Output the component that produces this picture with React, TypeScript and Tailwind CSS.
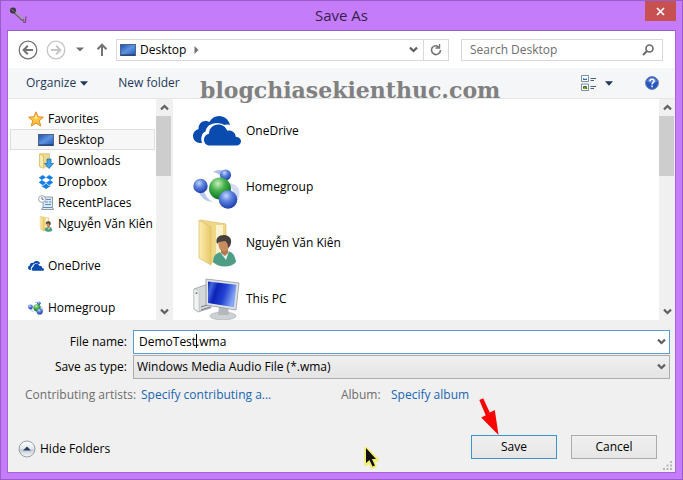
import { useState, type ReactNode } from "react";

function Chevron({ up = false, className = "" }: { up?: boolean; className?: string }) {
  return (
    <svg className={className} width="9" height="7" viewBox="0 0 9 7" fill="none" stroke="#606060" strokeWidth="2.2">
      <path d={up ? "M1 5.4 4.5 2 8 5.4" : "M1 1.6 4.5 5 8 1.6"} />
    </svg>
  );
}

function CloudIcon({ className }: { className: string }) {
  return (
    <svg className={className} viewBox="0 0 48 30" fill="#0a4bb0">
      <path d="M9 27H7C2.500 26.500 0 23.500 0 20c0-3.500 2.500-6.400 5.500-6.800C5.200 8.500 8.500 5 12.500 5c1.500 0 2.600.3 3.800 1C18.500 2 22 0 26 0c5.500 0 9.800 3.800 11 9-3-.8-5-.3-7 .6C24 5 14 7 12.500 15.500 8.500 17 7.500 22.500 9 27Z" />
      <path
        d="M17 29.500c-4 0-6-2.500-6-5.800 0-3.200 2-5.500 5-5.900C16 12.500 20 8.500 25.300 8.500c4.200 0 7.400 2.400 8.900 6.200 4.600-.8 8.200 1.800 8.500 6 3 .2 5.300 2 5.300 4.600 0 2.500-2 4.200-4.500 4.200Z"
        stroke="#fff"
        strokeWidth="2.400"
        paintOrder="stroke"
      />
    </svg>
  );
}

function HomegroupIcon({ className, id }: { className: string; id: string }) {
  return (
    <svg className={className} viewBox="0 0 48 42">
      <defs>
        <radialGradient id={id + "b"} cx=".4" cy=".3" r=".7">
          <stop offset="0" stopColor="#c3d6fb" />
          <stop offset=".45" stopColor="#5b80dd" />
          <stop offset="1" stopColor="#1c3fac" />
        </radialGradient>
        <radialGradient id={id + "g"} cx=".4" cy=".28" r=".72">
          <stop offset="0" stopColor="#c8f0bd" />
          <stop offset=".45" stopColor="#45b04b" />
          <stop offset="1" stopColor="#0b7424" />
        </radialGradient>
      </defs>
      <path d="M20 4q8-5 14 2l-5 4q-3-5-9-6Z" fill="#aebde8" />
      <path d="M5 22q4 12 15 12-8-4-9-12Z" fill="#b9c7ec" />
      <path d="M38 15q12 4 7 17l-6-3q3-8-4-12Z" fill="#d3dcf3" />
      <circle cx="32.500" cy="7" r="5.500" fill={`url(#${id}b)`} />
      <circle cx="7.500" cy="18" r="7.200" fill={`url(#${id}b)`} />
      <circle cx="27" cy="20.500" r="11" fill={`url(#${id}g)`} />
      <circle cx="35" cy="31.500" r="9.300" fill={`url(#${id}b)`} />
    </svg>
  );
}

function UserFolderIcon({ className, id }: { className: string; id: string }) {
  return (
    <svg className={className} viewBox="0 0 40 48">
      <defs>
        <linearGradient id={id}>
          <stop offset="0" stopColor="#fbeeb2" />
          <stop offset="1" stopColor="#e8c968" />
        </linearGradient>
      </defs>
      <path d="M3 1l26 4v33l-15 6Z" fill="#efd788" stroke="#dcc06b" strokeWidth=".7" />
      <path d="M19 6h7v30h-7Z" fill="#fffbe6" opacity=".75" />
      <path d="M2 1l12 7v38L2 39Z" fill={`url(#${id})`} stroke="#d9bc62" strokeWidth=".7" />
      <path d="M16 43c0-6 3-9 8-10l7-1c5 1 7 5 8 11-5 6-17 6-23 0Z" fill="#4d9e85" />
      <path d="M23 33l6 8 3-9Z" fill="#e2f4ec" />
      <path d="M24 29h7v5l-3 3-4-3Z" fill="#b2784f" />
      <ellipse cx="27" cy="25" rx="5.600" ry="7.500" fill="#c98c5f" />
      <path d="M20 25c-2-6 2-9 7-9 6 0 9 5 6 11l-2 2c0-4-1-6-3-7-3 1-6 0-8 3Z" fill="#47403f" />
    </svg>
  );
}

function ComputerIcon({ className }: { className: string }) {
  return (
    <svg className={className} viewBox="0 0 48 42">
      <defs>
        <linearGradient id="screen" x2="1" y2=".3">
          <stop offset="0" stopColor="#0c25aa" />
          <stop offset=".15" stopColor="#4468dc" />
          <stop offset=".35" stopColor="#0d22b8" />
          <stop offset=".65" stopColor="#2142d2" />
          <stop offset="1" stopColor="#86a5f3" />
        </linearGradient>
      </defs>
      <path d="M1 11l11-4 6 3v20L5 34l-4-3Z" fill="#d5d8da" stroke="#8e9498" strokeWidth=".7" />
      <path d="M1 11l5 2v21l-5-3Z" fill="#f1f2f3" stroke="#aeb2b5" strokeWidth=".5" />
      <circle cx="3.500" cy="15" r="1" fill="#4a9c45" />
      <path d="M8 29l9-3M8 32l9-3" stroke="#777c80" />
      <ellipse cx="30" cy="38" rx="13" ry="4" fill="#cfd2d5" stroke="#a5a9ad" strokeWidth=".6" />
      <path d="M26 29h9l1 8H25Z" fill="#b4b9be" />
      <path d="M13 1l33 4-3 27-30-5Z" fill="#dfe2e5" stroke="#92989e" strokeWidth=".8" />
      <path d="M15 3.500l28.500 3.300-2.500 22.500-26-4.300Z" fill="url(#screen)" />
    </svg>
  );
}

function MonitorIcon() {
  return (
    <svg className="h-3 w-4 shrink-0" viewBox="0 0 16 12">
      <defs>
        <linearGradient id="monitor" x2="1" y2="1">
          <stop offset="0" stopColor="#1b4fae" />
          <stop offset=".5" stopColor="#5f94df" />
          <stop offset="1" stopColor="#1c55b5" />
        </linearGradient>
      </defs>
      <rect x=".5" y=".5" width="15" height="11" fill="url(#monitor)" stroke="#4c6488" />
      <path d="M1 11h14" stroke="#16305e" />
    </svg>
  );
}

function StarIcon() {
  return (
    <svg className="size-4 shrink-0" viewBox="0 0 16 16">
      <path d="M8 .8l2.100 5 5.300.4-4.100 3.500 1.400 5.300L8 12.200 3.300 15l1.400-5.300L.6 6.200l5.300-.4Z" fill="#fdc63a" stroke="#e58a2a" strokeLinejoin="round" />
      <path d="M8 3.500l1.200 3.300 2.800.3-6 1Z" fill="#fff0a8" />
    </svg>
  );
}

function DownloadsIcon() {
  return (
    <svg className="size-4 shrink-0" viewBox="0 0 16 16">
      <path d="M2 .8h9.500V14H2Z" fill="#efd98c" stroke="#d3b75e" strokeWidth=".7" />
      <path d="M1.500.8l4 2v12.500l-4-1.800Z" fill="#f8eab0" stroke="#d3b75e" strokeWidth=".7" />
      <path d="M9 6h4v4.500h2.500L11 15.500l-4.500-5H9Z" fill="#3aa0e8" stroke="#1668af" strokeWidth=".7" />
    </svg>
  );
}

function DropboxIcon() {
  return (
    <svg className="size-4 shrink-0" viewBox="0 0 16 16" fill="#147fe6">
      <path d="M4.800 1 .8 3.700l3 2.400L8 3.500ZM11.200 1l4 2.700-3 2.400L8 3.500ZM.8 8.500l4 2.700L8 8.700 3.800 6.100ZM15.200 8.500l-4 2.700L8 8.700l4.200-2.600ZM4.900 12 8 9.500l3.100 2.500 1.300-.8v1L8 15l-4.400-2.800v-1Z" />
    </svg>
  );
}

function RecentIcon() {
  return (
    <svg className="size-4 shrink-0" viewBox="0 0 16 16">
      <path d="M5 2h9.500v10l1 2.500H3.500L5 12Z" fill="#dfe8f0" stroke="#75889b" strokeWidth=".8" />
      <path d="M8 4.500h5M7 7h3M11 7h2.500M7 9.500h6M5 12.500h9" stroke="#5f8fb8" />
      <circle cx="4" cy="4" r="3.400" fill="#f6f8fa" stroke="#8c98a4" strokeWidth=".8" />
      <path d="M4 2v2.300h1.600" fill="none" stroke="#4c5a68" strokeWidth=".8" />
    </svg>
  );
}

type TreeItem = { label: string; icon: ReactNode; child?: boolean; selected?: boolean; spaced?: boolean };

const places: TreeItem[] = [
  { label: "Favorites", icon: <StarIcon /> },
  { label: "Desktop", icon: <MonitorIcon />, child: true, selected: true },
  { label: "Downloads", icon: <DownloadsIcon />, child: true },
  { label: "Dropbox", icon: <DropboxIcon />, child: true },
  { label: "RecentPlaces", icon: <RecentIcon />, child: true },
  { label: "Nguyễn Văn Kiên", icon: <UserFolderIcon className="size-4 shrink-0" id="folderSmall" />, child: true },
  { label: "OneDrive", icon: <CloudIcon className="h-3 w-4 shrink-0" />, spaced: true },
  { label: "Homegroup", icon: <HomegroupIcon className="size-4 shrink-0" id="groupSmall" />, spaced: true },
];

const files = [
  { label: "OneDrive", icon: <CloudIcon className="h-[30px] w-12" /> },
  { label: "Homegroup", icon: <HomegroupIcon className="mt-1 h-[42px] w-12" id="groupLarge" /> },
  { label: "Nguyễn Văn Kiên", icon: <UserFolderIcon className="h-12 w-10" id="folderLarge" /> },
  { label: "This PC", icon: <ComputerIcon className="h-[42px] w-12" /> },
];

function ScrollBar() {
  return (
    <div className="flex w-4 shrink-0 flex-col bg-[#f0f0f0]" aria-hidden="true">
      <div className="flex h-[17px] items-center justify-center">
        <Chevron up />
      </div>
      <div className="mr-px h-[60px] bg-[#cdcdcd]" />
      <div className="mt-auto flex h-[17px] items-center justify-center">
        <Chevron />
      </div>
    </div>
  );
}

function TitleBar() {
  return (
    <header className="grid h-[29px] shrink-0 grid-cols-3 items-start">
      <svg className="mt-1.5 ml-0.5 size-[18px]" viewBox="0 0 18 18" fill="none">
        <path d="M5 5l9 8" stroke="#77657c" strokeWidth="3" strokeLinecap="round" />
        <path d="M5 4l9 8" stroke="#d9cbdc" />
        <circle cx="4" cy="3.500" r="3" fill="#3c3640" />
        <path d="M2.500 2.500l3 2" stroke="#8b8190" />
        <path d="M14 15l2.500.5.5-6" stroke="#5a4960" />
      </svg>
      <h1 className="pt-[3px] text-center text-[15px] leading-[22px] text-[#35204d]">Save As</h1>
      <button aria-label="Close" className="flex h-5 w-[31px] items-center justify-center justify-self-end bg-[#c75050]">
        <svg width="9" height="9" viewBox="0 0 9 9" stroke="#fff" strokeWidth="1.700">
          <path d="M1 1l7 7M8 1 1 8" />
        </svg>
      </button>
    </header>
  );
}

function NavigationBar() {
  return (
    <nav className="flex h-[37px] shrink-0 items-center pr-3 pl-2.5">
      <button aria-label="Back" className="shrink-0">
        <svg width="20" height="20" viewBox="0 0 20 20" fill="none" stroke="#737373">
          <circle cx="10" cy="10" r="8.800" strokeWidth="1.300" />
          <path d="M15 10H6M9.800 5.800 5.600 10l4.200 4.200" strokeWidth="2" />
        </svg>
      </button>
      <button aria-label="Forward" className="ml-2 shrink-0">
        <svg width="20" height="20" viewBox="0 0 20 20" fill="none" stroke="#c6c6c6">
          <circle cx="10" cy="10" r="8.800" strokeWidth="1.300" />
          <path d="M5 10h9M10.200 5.800l4.200 4.200-4.200 4.200" strokeWidth="2" />
        </svg>
      </button>
      <button aria-label="Recent locations" className="ml-2.5 shrink-0">
        <svg width="8" height="5" viewBox="0 0 8 5" fill="#707070">
          <path d="M0 .5h8L4 4.500Z" />
        </svg>
      </button>
      <button aria-label="Up" className="ml-3 shrink-0">
        <svg width="12" height="13" viewBox="0 0 12 13" fill="none" stroke="#737373" strokeWidth="2">
          <path d="M6 13V2M1.500 6.200 6 1.700l4.500 4.500" />
        </svg>
      </button>
      <div className="ml-2 flex h-[22px] min-w-0 flex-1 items-center border border-[#d9d9d9] pl-[3px]">
        <MonitorIcon />
        <span className="ml-1">Desktop</span>
        <svg className="ml-2" width="5" height="8" viewBox="0 0 5 8" fill="#707070">
          <path d="M.5 0v8l4-4Z" />
        </svg>
        <button aria-label="Previous locations" className="ml-auto flex h-full w-5 items-center justify-center">
          <Chevron />
        </button>
        <button aria-label="Refresh" className="flex h-full w-[25px] items-center justify-center border-l border-[#d9d9d9]">
          <svg width="12" height="12" viewBox="0 0 12 12" fill="none" stroke="#737373" strokeWidth="1.600">
            <path d="M3.500 2.300A4.500 4.500 0 1 0 10.500 6" />
            <path d="M3.500 2.300Q6 1 8.500 3M9.500 0v4H5.500" strokeWidth="1.400" />
          </svg>
        </button>
      </div>
      <div className="ml-3 flex h-[22px] w-[202px] items-center border border-[#d9d9d9] pr-2 pl-2">
        <input aria-label="Search Desktop" placeholder="Search Desktop" className="w-full min-w-0 bg-transparent outline-none placeholder:text-[#6d6d6d]" />
        <svg className="shrink-0" width="12" height="12" viewBox="0 0 12 12" fill="none" stroke="#6d6d6d">
          <circle cx="7.500" cy="4.500" r="3.500" strokeWidth="1.700" />
          <path d="M5 7 1 11" strokeWidth="2.200" />
        </svg>
      </div>
    </nav>
  );
}

function Triangle() {
  return (
    <svg width="8" height="5" viewBox="0 0 8 5" fill="#1e395b">
      <path d="M0 .3h8L4 4.700Z" />
    </svg>
  );
}

function Toolbar() {
  return (
    <div className="relative flex h-[31px] shrink-0 items-center border-b border-[#e3e5e7] bg-[#f5f6f7] pr-4 pl-[18px] text-[#1e395b]">
      <button className="flex items-center gap-1">
        Organize <Triangle />
      </button>
      <button className="ml-[30px]">New folder</button>
      <button aria-label="Change your view" className="ml-auto flex items-center gap-2">
        <svg width="16" height="16" viewBox="0 0 16 16" fill="none">
          <path d="M.5.5h7v6h-7ZM.5 9h7v6.500h-7Z" fill="#fff" stroke="#7c8fa5" />
          <path d="M2 5h4V3.500L4 4 2 3Z" fill="#2470b5" />
          <path d="M2 11h4v3H2Z" fill="#80a63a" />
          <path d="M2 13l2-2 2 3" stroke="#315f28" />
          <path d="M9.500 3.500H15M9.500 5.500H13M9.500 11.500H15M9.500 13.500H13" stroke="#4b5f76" />
        </svg>
        <Triangle />
      </button>
      <button aria-label="Get help" className="ml-8">
        <svg width="14" height="14" viewBox="0 0 14 14">
          <circle cx="7" cy="7" r="6.500" fill="#2856bd" stroke="#7189b8" />
          <path d="M2 5.500a5.200 5.200 0 0 1 10 0Q7 8 2 5.500Z" fill="#7fa3ea" opacity=".6" />
          <path d="M5 5.300C5 2.600 9.200 2.700 9.100 5.200 9 6.700 7.100 6.700 7.100 8.400M7.100 9.600v1.600" fill="none" stroke="#fff" strokeWidth="1.500" />
        </svg>
      </button>
      <div className="pointer-events-none absolute top-2 left-48 z-10 font-['DejaVu_Serif',serif] text-[22px] leading-7 font-bold text-[#808080]">
        blogchiasekienthuc.com
      </div>
    </div>
  );
}

function Browser() {
  return (
    <main className="flex min-h-0 flex-1">
      <aside className="flex w-[164px] shrink-0 overflow-hidden">
        <ul className="min-w-0 flex-1 pt-[9px] pr-px pl-0.5">
          {places.map((item) => (
            <li
              key={item.label}
              className={
                "flex h-[21px] items-center border whitespace-nowrap " +
                (item.child ? "gap-1 pl-[27px] " : "gap-1 pl-[17px] ") +
                (item.spaced ? "mt-[21px] " : "") +
                (item.selected ? "border-[#dedede] bg-[#f7f7f7]" : "border-transparent")
              }
            >
              {item.icon}
              <span>{item.label}</span>
            </li>
          ))}
        </ul>
        <ScrollBar />
      </aside>
      <section className="flex min-w-0 flex-1 overflow-hidden border-l border-[#f0f0f0]">
        <ul className="min-w-0 flex-1 pt-1 pl-5">
          {files.map((file) => (
            <li key={file.label} className="flex h-14 items-center gap-[5px]">
              <span className="flex w-12 shrink-0 justify-center">{file.icon}</span>
              <span>{file.label}</span>
            </li>
          ))}
        </ul>
        <ScrollBar />
      </section>
    </main>
  );
}

function Details() {
  const [name, setName] = useState("DemoTest.wma");
  return (
    <footer className="relative flex shrink-0 flex-col bg-[#f0f0f0] pt-2.5 pb-[13px]">
      <div className="grid grid-cols-[119px_1fr] items-center gap-x-1.5 gap-y-px pr-[5px]">
        <label htmlFor="file-name" className="text-right">File name:</label>
        <div className="relative">
          <input
            id="file-name"
            value={name}
            onChange={(event) => setName(event.target.value)}
            className="block h-6 w-full border border-[#5c9bd1] bg-white pr-6 pb-0.5 pl-[5px] outline-none"
          />
          <span className="absolute top-1 left-[63px] h-3.5 w-px bg-black" />
          <Chevron className="absolute top-2 right-1" />
        </div>
        <label htmlFor="save-type" className="text-right">Save as type:</label>
        <div className="relative">
          <select
            id="save-type"
            className="block h-6 w-full appearance-none border border-[#acacac] bg-linear-to-b from-[#f0f0f0] to-[#e4e4e4] pr-6 pl-[3px] outline-none"
          >
            <option>Windows Media Audio File (*.wma)</option>
          </select>
          <Chevron className="pointer-events-none absolute top-2 right-1" />
        </div>
      </div>
      <dl className="mt-1.5 flex h-5 items-center pl-[17px] text-[#6d6d6d]">
        <dt className="w-[116px]">Contributing artists:</dt>
        <dd className="w-[200px]">
          <button className="text-[#1a66b0]">Specify contributing a...</button>
        </dd>
        <dt className="w-[50px]">Album:</dt>
        <dd>
          <button className="text-[#1a66b0]">Specify album</button>
        </dd>
      </dl>
      <div className="mt-[30px] flex h-6 items-center pr-[18px] pl-2.5">
        <button className="flex items-center gap-1 pt-1">
          <svg width="18" height="18" viewBox="0 0 18 18">
            <defs>
              <linearGradient id="toggle" x2="0" y2="1">
                <stop offset="0" stopColor="#fff" />
                <stop offset=".5" stopColor="#e2e6ea" />
                <stop offset=".55" stopColor="#c3cad1" />
                <stop offset="1" stopColor="#f8fafb" />
              </linearGradient>
            </defs>
            <circle cx="9" cy="9" r="8" fill="url(#toggle)" stroke="#98a0a8" />
            <path d="M5 10.500 9 6.500l4 4Z" fill="#263d68" />
          </svg>
          Hide Folders
        </button>
        <button className="ml-auto h-6 w-[86px] border border-[#3c94cc] bg-linear-to-b from-[#f0f0f0] to-[#e6e6e6]">Save</button>
        <button className="ml-3.5 h-6 w-[86px] border border-[#acacac] bg-linear-to-b from-[#f0f0f0] to-[#e6e6e6]">Cancel</button>
      </div>
      <svg className="pointer-events-none absolute right-[175px] bottom-9 h-[38px] w-[21px]" viewBox="0 0 21 38">
        <path d="M.3 2 4.200.2l6.600 14.200 5-2.400L19.500 37 2.200 19.500l4.500-2.200Z" fill="#f80505" />
      </svg>
      <svg className="pointer-events-none absolute bottom-0.5 left-[355px]" width="16" height="24" viewBox="0 0 16 24">
        <path d="M3 3v15l3.500-3 2.800 6 2.400-1-2.800-6H14Z" fill="#f4ee4c" stroke="#f4ee4c" strokeWidth="4" strokeLinejoin="round" opacity=".75" />
        <path d="M3 2v15l3.500-3 3 6.500 2.400-1-3-6.500H13Z" fill="#111" />
      </svg>
      <svg className="absolute right-[3px] bottom-[2px]" width="9" height="9" viewBox="0 0 9 9" fill="#b8b8b8">
        <path d="M7 0h2v2H7ZM7 3.500h2v2H7ZM7 7h2v2H7ZM3.500 3.500h2v2h-2ZM3.500 7h2v2h-2ZM0 7h2v2H0Z" />
      </svg>
    </footer>
  );
}

export default function App() {
  return (
    <div className="flex h-screen min-h-[440px] flex-col border border-[#9a5cc9] bg-[#c57cfa] px-1.5 pb-1.5 font-['Open_Sans','Noto_Sans',sans-serif] text-xs leading-4 text-black">
      <TitleBar />
      <div className="flex min-h-0 flex-1 flex-col border border-[#a563d4] border-t-[#9a5cc9] bg-white">
        <NavigationBar />
        <Toolbar />
        <Browser />
        <Details />
      </div>
    </div>
  );
}
